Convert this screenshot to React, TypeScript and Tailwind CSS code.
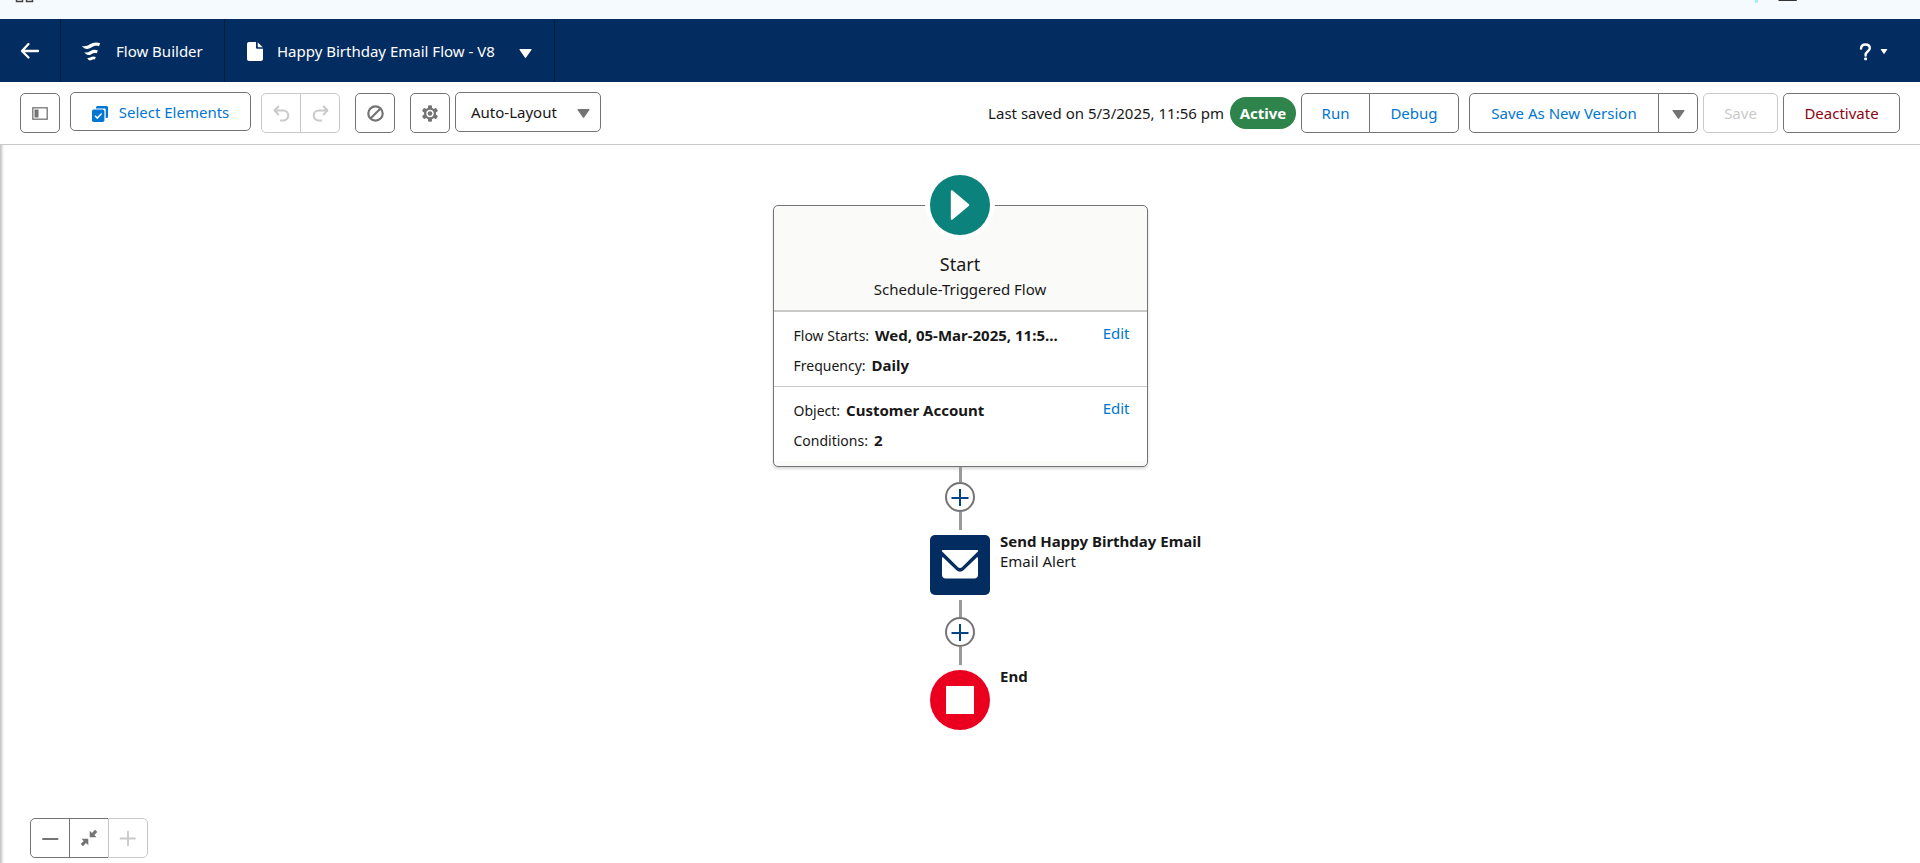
import type { ReactNode } from "react";

const groupBase =
  "flex h-10 items-center justify-center border border-[#747474] bg-white";
const iconButton = `${groupBase} w-10`;

function Caret({ className }: { className: string }) {
  return (
    <svg viewBox="0 0 12 9" className={className} aria-hidden="true">
      <path d="M0.600 0h10.800c.5 0 .8.5.5.9L6.600 8.500c-.3.5-.9.5-1.200 0L.1.900C-.2.500.1 0 .6 0z" fill="currentColor" />
    </svg>
  );
}

function TopStrip() {
  return (
    <div className="flex h-[19px] items-start justify-between bg-[#f4fafe]">
      <svg width="40" height="4" viewBox="0 0 40 4" aria-hidden="true">
        <path d="M16.500 0v1.500h6V0M26.500 0v1.500h6V0" fill="none" stroke="#444" strokeWidth="1.500" />
      </svg>
      <svg width="180" height="4" viewBox="0 0 180 4" aria-hidden="true">
        <path d="M15 0h3v2l-2 1h-1z" fill="#9beeff" />
        <path d="M38 0h19v0.500l-1 .5H39z" fill="#333" />
      </svg>
    </div>
  );
}

function Header() {
  return (
    <header className="flex h-[63px] items-stretch bg-[#032d60] text-[15px] text-white">
      <a href="#back" aria-label="Back" className="flex w-[61px] items-center justify-center border-r border-[#041c3c]">
        <svg width="20" height="18" viewBox="0 0 20 18" aria-hidden="true">
          <path d="M8.500 2L2 9l6.500 6.500M2.500 9H18" fill="none" stroke="#fff" strokeWidth="2.300" strokeLinecap="round" strokeLinejoin="round" />
        </svg>
      </a>
      <div className="flex w-[164px] items-center border-r border-[#041c3c] pl-5 pt-0.5">
        <svg width="20" height="20" viewBox="0 0 20 20" aria-hidden="true">
          <g fill="#fff">
            <path d="M0.800 3.900C4 4.700 6.200 4 8.500 2.500 12 .300 15.500-.2 19.200 1.300L18 4.200c-3-1-5.200-.4-7.700 1.300C7 7.700 3.500 7.500.800 3.900z" />
            <path d="M3.300 10.300c2.200.5 4 0 5.700-1.100 2.600-1.600 5-1.900 7.900-.7l-1.200 2.700c-2-.6-3.600-.2-5.400 1-2.500 1.600-5.200 1-7-1.900z" />
            <path d="M6.300 16c1.300.2 2.400-.1 3.400-.7 1.700-1 3.300-1.100 5.100-.3l-1 2.500c-1.200-.4-2.200-.1-3.300.5-1.700 1-3.400.3-4.200-2z" />
          </g>
        </svg>
        <span className="ml-[15px]">Flow Builder</span>
      </div>
      <button type="button" className="flex w-[330px] items-center border-r border-[#041c3c] pl-[22px] pt-0.5">
        <svg width="16" height="19" viewBox="0 0 16 19" aria-hidden="true">
          <path d="M2 0h7v5.500c0 .8.500 1.300 1.300 1.300H16V17c0 1.100-.9 2-2 2H2c-1.100 0-2-.9-2-2V2C0 .900.900 0 2 0z" fill="#fff" />
          <path d="M10.700.300L15.700 5.200h-4.200c-.5 0-.8-.3-.8-.8z" fill="#fff" />
        </svg>
        <span className="ml-[14px]">Happy Birthday Email Flow - V8</span>
        <Caret className="ml-6 mt-[3px] h-[9px] w-[13px]" />
      </button>
      <button type="button" aria-label="Help" className="ml-auto mr-8 flex items-center gap-2 pt-0.5">
        <svg width="13" height="18" viewBox="0 0 13 18" aria-hidden="true">
          <path d="M2 5.600C2.200 3 3.900 1.500 6.400 1.500c2.600 0 4.400 1.500 4.400 3.700 0 3-4.200 3.600-4.200 6.500v.9" fill="none" stroke="#fff" strokeWidth="2.400" strokeLinecap="round" />
          <rect x="5.200" y="14.500" width="2.800" height="2.800" rx="0.700" fill="#fff" />
        </svg>
        <Caret className="h-[5px] w-2" />
      </button>
    </header>
  );
}

function Toolbar() {
  return (
    <div className="flex h-[63px] items-start border-b border-[#c9c9c9] bg-white px-5 pt-[11px] text-[15px]">
      <button type="button" aria-label="Toggle Toolbox" className={`${iconButton} rounded-[5px]`}>
        <svg width="16" height="13" viewBox="0 0 16 13" aria-hidden="true">
          <rect x="0.800" y="0.800" width="14.400" height="11.400" fill="none" stroke="#747474" strokeWidth="1.300" />
          <rect x="2.500" y="2.500" width="4" height="8" fill="#747474" />
        </svg>
      </button>
      <button type="button" className="-mt-px ml-[10px] flex h-[39px] w-[181px] items-center justify-center gap-[11px] rounded-[5px] border border-[#747474] pt-0.5 text-[#0176d3]">
        <svg width="16" height="16" viewBox="0 0 16 16" className="mt-0.5" aria-hidden="true">
          <path d="M4 2.400V1.600C4 .700 4.700 0 5.600 0h8.800c.9 0 1.600.700 1.600 1.600v8.800c0 .9-.7 1.600-1.600 1.600h-.7V3.200c0-.5-.3-.8-.8-.8z" fill="#0176d3" />
          <rect x="0" y="3.600" width="12.400" height="12.400" rx="1.800" fill="#0176d3" />
          <path d="M3 9.800l2.300 2.300L9.600 7.600" fill="none" stroke="#fff" strokeWidth="1.500" />
        </svg>
        Select Elements
      </button>
      <div className="ml-[10px] flex">
        <button type="button" disabled aria-label="Undo" className="flex h-10 w-10 items-center justify-center rounded-l-[5px] border border-[#c9c9c9]">
          <svg width="17" height="17" viewBox="0 0 17 17" aria-hidden="true">
            <path d="M5.300 1.500L1.600 5.500l3.700 3.900M2.300 5.500h8a5 5 0 0 1 0 10H7.800" fill="none" stroke="#c9c9c9" strokeWidth="2" strokeLinecap="round" strokeLinejoin="round" />
          </svg>
        </button>
        <button type="button" disabled aria-label="Redo" className="-ml-px flex h-10 w-10 items-center justify-center rounded-r-[5px] border border-[#c9c9c9]">
          <svg width="17" height="17" viewBox="0 0 17 17" aria-hidden="true">
            <path d="M11.700 1.500l3.700 4-3.700 3.900M14.700 5.500h-8a5 5 0 0 0 0 10h2.500" fill="none" stroke="#c9c9c9" strokeWidth="2" strokeLinecap="round" strokeLinejoin="round" />
          </svg>
        </button>
      </div>
      <button type="button" aria-label="Show Errors" className={`${iconButton} ml-[15px] rounded-[5px]`}>
        <svg width="17" height="17" viewBox="0 0 17 17" aria-hidden="true">
          <circle cx="8.500" cy="8.500" r="7.200" fill="none" stroke="#747474" strokeWidth="2.200" />
          <path d="M13.300 3.700l-9.600 9.600" stroke="#747474" strokeWidth="2.200" />
        </svg>
      </button>
      <button type="button" aria-label="Flow Settings" className={`${iconButton} ml-[15px] rounded-[5px]`}>
        <svg width="16" height="17" viewBox="0 0 16 17" aria-hidden="true">
          <g fill="#747474">
            <rect x="6" y="0.300" width="4" height="16.400" rx="1.200" />
            <rect x="6" y="0.300" width="4" height="16.400" rx="1.200" transform="rotate(60 8 8.500)" />
            <rect x="6" y="0.300" width="4" height="16.400" rx="1.200" transform="rotate(-60 8 8.500)" />
            <circle cx="8" cy="8.500" r="6" />
          </g>
          <circle cx="8" cy="8.500" r="3.700" fill="#fff" />
          <circle cx="8" cy="8.500" r="2.300" fill="#747474" />
        </svg>
      </button>
      <div className="-mt-px ml-[5px] grid items-center">
        <select aria-label="Layout mode" className="col-start-1 row-start-1 h-10 w-[146px] appearance-none rounded-[5px] border border-[#747474] bg-white pl-[15px] text-[#181818]">
          <option>Auto-Layout</option>
          <option>Free-Form</option>
        </select>
        <Caret className="pointer-events-none col-start-1 row-start-1 mr-[11px] mt-[3px] h-[9px] w-[13px] justify-self-end text-[#747474]" />
      </div>

      <div className="ml-auto flex items-center">
        <span className="text-[#181818]">Last saved on 5/3/2025, 11:56 pm</span>
        <span className="ml-[6px] flex h-8 w-[66px] items-center justify-center rounded-full bg-[#2e844a] font-bold text-white">Active</span>
        <div className="ml-[5px] flex text-[#0176d3]">
          <button type="button" className={`${groupBase} w-[69px] rounded-l-[5px]`}>Run</button>
          <button type="button" className={`${groupBase} -ml-px w-[90px] rounded-r-[5px]`}>Debug</button>
        </div>
        <div className="ml-[10px] flex text-[#0176d3]">
          <button type="button" className={`${groupBase} w-[190px] rounded-l-[5px]`}>Save As New Version</button>
          <button type="button" aria-label="More save options" className={`${groupBase} -ml-px w-10 rounded-r-[5px]`}>
            <Caret className="mt-[3px] h-[9px] w-[13px] text-[#747474]" />
          </button>
        </div>
        <button type="button" disabled className="ml-[5px] h-10 w-[75px] rounded-[5px] border border-[#c9c9c9] text-[#c9c9c9]">Save</button>
        <button type="button" className={`${groupBase} ml-[5px] w-[117px] rounded-[5px] text-[#8e030f]`}>Deactivate</button>
      </div>
    </div>
  );
}

function Connector({ stem }: { stem: string }) {
  return (
    <div className="flex flex-col items-center">
      <div className={`${stem} w-[3px] bg-[#999]`} />
      <button type="button" aria-label="Add element" className="flex size-[30px] items-center justify-center rounded-full border-2 border-[#747474] bg-white">
        <svg width="18" height="18" viewBox="0 0 18 18" aria-hidden="true">
          <path d="M9 1v17M0.500 10h17" stroke="#014486" strokeWidth="2" />
        </svg>
      </button>
      <div className="h-[18px] w-[3px] bg-[#999]" />
    </div>
  );
}

function Detail({ label, value }: { label: string; value: string }) {
  return (
    <div className="flex h-[30px] items-center gap-[6px] whitespace-nowrap">
      <dt className="text-[14px]">{label}</dt>
      <dd className="font-bold">{value}</dd>
    </div>
  );
}

function Section({ children }: { children: ReactNode }) {
  return (
    <section className="flex items-start justify-between bg-white pb-[6px] pl-5 pr-[17px] pt-2">
      <dl>{children}</dl>
      <a href="#edit" className="leading-[26px] text-[#0176d3]">Edit</a>
    </section>
  );
}

function Node({ icon, title, subtitle }: { icon: ReactNode; title: string; subtitle?: string }) {
  return (
    <div className="my-[5px] grid w-full grid-cols-[1fr_60px_1fr] gap-[10px]">
      <div className="col-start-2">{icon}</div>
      <div className="-mt-1 leading-5">
        <p className="font-bold">{title}</p>
        {subtitle && <p>{subtitle}</p>}
      </div>
    </div>
  );
}

export default function App() {
  return (
    <div className="flex min-h-screen flex-col bg-white font-['Noto_Sans','Open_Sans',sans-serif]">
      <TopStrip />
      <Header />
      <Toolbar />
      <main className="flex flex-1 flex-col text-[15px] text-[#181818] shadow-[inset_5px_0_3px_-3px_rgba(0,0,0,0.25)]">
        <div className="flex flex-col items-center pt-[25px]">
          <div className="relative z-10 -mb-[35px] flex size-[70px] items-center justify-center rounded-full bg-white">
            <svg width="60" height="60" viewBox="0 0 60 60" aria-hidden="true">
              <circle cx="30" cy="30" r="30" fill="#0b827c" />
              <path d="M20.800 16.500c0-1.300.9-1.700 1.800-1L39 29.200c.5.500.5 1.100 0 1.600L22.600 44.600c-.9.700-1.800.3-1.800-1z" fill="#fff" />
            </svg>
          </div>
          <div className="w-[375px] overflow-hidden rounded-[5px] border border-[#747474] bg-[#fafaf9] pb-[5px] shadow-[0_2px_3px_rgba(0,0,0,0.16)]">
            <div className="border-b-2 border-[#c9c9c9] pb-2 pt-[46px] text-center">
              <h1 className="text-[18px] leading-[25px]">Start</h1>
              <p className="leading-[25px]">Schedule-Triggered Flow</p>
            </div>
            <Section>
              <Detail label="Flow Starts:" value="Wed, 05-Mar-2025, 11:5..." />
              <Detail label="Frequency:" value="Daily" />
            </Section>
            <div className="border-t border-[#c9c9c9]">
              <Section>
                <Detail label="Object:" value="Customer Account" />
                <Detail label="Conditions:" value="2" />
              </Section>
            </div>
          </div>
          <Connector stem="h-[15px]" />
          <Node
            title="Send Happy Birthday Email"
            subtitle="Email Alert"
            icon={
              <svg width="60" height="60" viewBox="0 0 60 60" aria-hidden="true">
                <rect width="60" height="60" rx="5" fill="#032d60" />
                <path d="M12.500 15h35c.7 0 .9 1 .3 1.600L32 32.200c-1.200 1.100-2.800 1.100-4 0L12.200 16.600c-.6-.6-.4-1.600.3-1.600z" fill="#fff" />
                <path d="M12 23c0-.8.600-1 1.200-.5L26.500 35.300c2 1.800 5 1.800 7 0L46.800 22.500c.6-.5 1.200-.3 1.200.5V40c0 2-1.600 3.600-3.600 3.600H15.600c-2 0-3.600-1.600-3.600-3.600z" fill="#fff" />
              </svg>
            }
          />
          <Connector stem="h-[17px]" />
          <Node
            title="End"
            icon={
              <svg width="60" height="60" viewBox="0 0 60 60" aria-hidden="true">
                <circle cx="30" cy="30" r="30" fill="#ea001e" />
                <rect x="16" y="16" width="28" height="28" rx="0.500" fill="#fff" />
              </svg>
            }
          />
        </div>
        <div className="mb-[5px] ml-[30px] mt-auto flex">
          <button type="button" aria-label="Zoom Out" className={`${iconButton} rounded-l-[5px]`}>
            <svg width="18" height="18" viewBox="0 0 18 18" aria-hidden="true">
              <path d="M2 10h14.500" stroke="#747474" strokeWidth="2" strokeLinecap="round" />
            </svg>
          </button>
          <button type="button" aria-label="Zoom to Fit" className={`${groupBase} -ml-px w-[39px] border-r-0`}>
            <svg width="18" height="18" viewBox="0 0 18 18" aria-hidden="true">
              <path d="M9.700 1.800v6.500h6.800l-2.200-2.300 3-3-2.300-2.300-3 3.200zM8.300 16.200V9.700H1.500L3.700 12l-3 3L3 17.300l3-3.200z" fill="#747474" />
            </svg>
          </button>
          <button type="button" disabled aria-label="Zoom In" className="flex h-10 w-10 items-center justify-center rounded-r-[5px] border border-[#c9c9c9]">
            <svg width="18" height="18" viewBox="0 0 18 18" aria-hidden="true">
              <path d="M9 2.500v14M1.500 9.500h14.500" stroke="#c9c9c9" strokeWidth="1.800" strokeLinecap="round" />
            </svg>
          </button>
        </div>
      </main>
    </div>
  );
}
